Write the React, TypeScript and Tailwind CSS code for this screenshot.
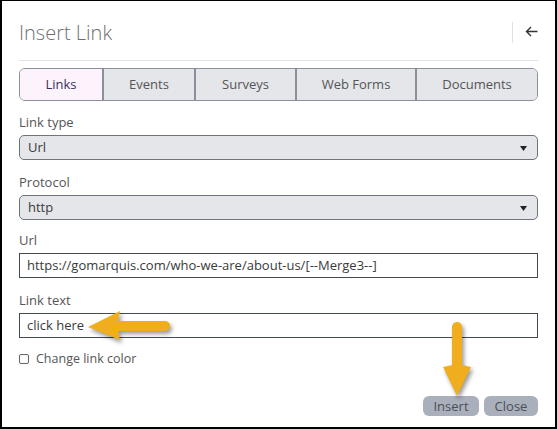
import { useState } from 'react';

const TABS = [
  { id: 'links', label: 'Links', width: 'w-[84px]' },
  { id: 'events', label: 'Events', width: 'w-[92px]' },
  { id: 'surveys', label: 'Surveys', width: 'w-[101px]' },
  { id: 'webforms', label: 'Web Forms', width: 'w-[120px]' },
  { id: 'documents', label: 'Documents', width: 'flex-1' },
];

function Caret() {
  return (
    <svg width="7" height="5" viewBox="0 0 7 5" className="absolute right-[10px] top-[10px]">
      <path d="M0 0 L7 0 L3.5 5 Z" fill="#222" />
    </svg>
  );
}

function SelectBox({ value }: { value: string }) {
  return (
    <div className="relative h-[25px] rounded-[5px] border border-[#6f747c] bg-[#e4e6ea] pl-[8px] text-[13px] leading-[23px] text-[#3a3a3a]">
      {value}
      <Caret />
    </div>
  );
}

function TextBox({ value }: { value: string }) {
  return (
    <div className="h-[25px] border border-[#444a52] bg-white pl-[7px] text-[13px] leading-[23px] text-[#3a3a3a]">
      {value}
    </div>
  );
}

function Label({ children }: { children: string }) {
  return <div className="mb-[4px] h-[18px] text-[13px] leading-[18px] text-[#555]">{children}</div>;
}

export default function App() {
  const [tab, setTab] = useState('links');

  return (
    <div
      className="relative h-[429px] w-[557px] border-t border-l-2 border-r-2 border-b-2 border-black bg-white px-[17px]"
      style={{ fontFamily: '"Open Sans", "Noto Sans", sans-serif' }}
    >
      <div className="flex h-[60px] items-center justify-between border-b border-[#e3e3e3] pt-[4px]">
        <h2 className="text-[20px] font-light leading-[24px] text-[#707070]">Insert Link</h2>
        <div className="flex items-center">
          <div className="mr-[12px] h-[21px] w-px bg-[#e0e0e8]" />
          <svg width="13" height="11" viewBox="0 0 13 11" className="mb-[2px]">
            <path d="M12.5 5.5 H1.5 M6 1 L1.5 5.5 L6 10" stroke="#333" strokeWidth="1.4" fill="none" />
          </svg>
        </div>
      </div>

      <div className="mt-[7px] flex h-[33px] overflow-hidden rounded-[6px] border border-[#8a9099]">
        {TABS.map((t, i) => (
          <button
            key={t.id}
            type="button"
            onClick={() => setTab(t.id)}
            className={`${t.width} ${i < TABS.length - 1 ? 'border-r-2 border-[#8a9099]' : ''} ${
              tab === t.id ? 'bg-[#fcf3fc] text-[#3b2f5c]' : 'bg-[#e4e6ea] text-[#555]'
            } text-[13px]`}
          >
            {t.label}
          </button>
        ))}
      </div>

      <div className="mt-[12px]">
        <Label>Link type</Label>
        <SelectBox value="Url" />
      </div>
      <div className="mt-[13px]">
        <Label>Protocol</Label>
        <SelectBox value="http" />
      </div>
      <div className="mt-[11px]">
        <Label>Url</Label>
        <TextBox value="https://gomarquis.com/who-we-are/about-us/[--Merge3--]" />
      </div>
      <div className="mt-[13px]">
        <Label>Link text</Label>
        <TextBox value="click here" />
      </div>

      <label className="mt-[12px] flex items-center gap-[7px] text-[12.5px] leading-[18px] text-[#555]">
        <span className="h-[10px] w-[10px] rounded-[2px] border border-[#666] bg-white" />
        Change link color
      </label>

      <div className="mt-[28px] flex justify-end gap-[5px]">
        <button type="button" className="h-[20px] w-[56px] rounded-[6px] bg-[#a9b0bb] text-[13px] leading-[20px] text-[#4a4f57]">
          Insert
        </button>
        <button type="button" className="h-[20px] w-[54px] rounded-[6px] bg-[#a9b0bb] text-[13px] leading-[20px] text-[#4a4f57]">
          Close
        </button>
      </div>

      <svg
        width="92"
        height="44"
        viewBox="0 0 92 44"
        className="absolute left-[84px] top-[305px]"
        style={{ filter: 'drop-shadow(2px 3px 2px rgba(0,0,0,0.4))' }}
      >
        <line x1="30" y1="20" x2="79" y2="20" stroke="#f0ae1e" strokeWidth="10" strokeLinecap="round" />
        <path d="M2 21 L34 5 Q30 20 34 34 Z" fill="#f0ae1e" />
      </svg>

      <svg
        width="36"
        height="84"
        viewBox="0 0 36 84"
        className="absolute left-[438px] top-[316px]"
        style={{ filter: 'drop-shadow(2px 3px 2px rgba(0,0,0,0.4))' }}
      >
        <line x1="17" y1="10" x2="17" y2="56" stroke="#f0ae1e" strokeWidth="10" strokeLinecap="round" />
        <path d="M3 50 Q17 46 31 50 L17 79 Z" fill="#f0ae1e" />
      </svg>
    </div>
  );
}
